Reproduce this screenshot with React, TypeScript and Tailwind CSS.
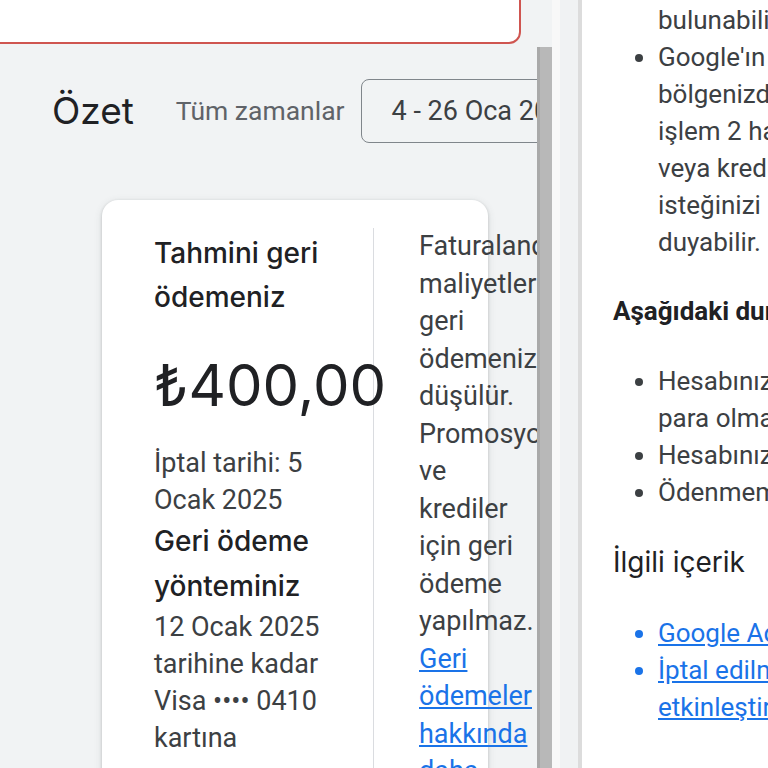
import * as React from "react";

const sans = "font-['Inter','Noto_Sans',sans-serif]";
const body = "font-['Roboto','Liberation_Sans',sans-serif]";

function Scrollbar() {
  return (
    <div className="flex w-[15px] shrink-0 flex-col bg-[#f1f3f4]">
      <div className="h-[47px] shrink-0" />
      <div className="flex-1 border-l-[3px] border-[#a9a9a9] bg-[#b8b8b8]" />
    </div>
  );
}

function SummaryCard() {
  return (
    <div className="ml-[102px] mt-[57px] flex w-[386px] shrink-0 rounded-2xl bg-white pt-[28px] shadow-[0_1px_3px_rgba(60,64,67,0.25),0_2px_8px_rgba(60,64,67,0.12)]">
      <div className="w-[271px] shrink-0 pl-[52px] pr-[24px] pt-[3px]">
        <h3 className={`${sans} text-[28px] font-medium leading-[44px] text-[#202124]`}>
          Tahmini geri ödemeniz
        </h3>
        <div className={`${sans} relative z-10 mt-[31px] whitespace-nowrap text-[58px] leading-[70px] text-[#202124]`}>
          ₺400,00
        </div>
        <p className={`${body} mt-[25px] text-[27px] leading-[37px] text-[#3c4043]`}>
          İptal tarihi: 5 Ocak 2025
        </p>
        <h3 className={`${sans} text-[28px] font-medium leading-[45px] text-[#202124]`}>
          Geri ödeme yönteminiz
        </h3>
        <p className={`${body} text-[27px] leading-[37px] text-[#3c4043]`}>
          12 Ocak 2025 tarihine kadar Visa •••• 0410 kartına
        </p>
      </div>
      <div className="w-px shrink-0 bg-[#dadce0]" />
      <div className="shrink-0 pl-[45px]">
        <p className={`${body} w-[120px] text-[27px] leading-[37.5px] text-[#3c4043]`}>
          Faturalandırılan maliyetler geri ödemenizden düşülür. Promosyonlar ve
          krediler için geri ödeme yapılmaz.{" "}
          <a href="#" className="text-[#1a73e8] underline underline-offset-2">
            Geri ödemeler hakkında daha fazla bilgi
          </a>
        </p>
      </div>
    </div>
  );
}

function LeftPane() {
  return (
    <div className="flex h-full w-[552px] shrink-0">
      <div className="flex h-full w-[537px] shrink-0 flex-col overflow-hidden bg-[#f1f3f4]">
        <div className="-ml-[20px] -mt-[20px] h-[64px] w-[541px] shrink-0 rounded-xl border-2 border-[#cf5550] bg-white" />
        <div className="mt-[35px] flex shrink-0 items-center pl-[52px]">
          <h2 className={`${sans} shrink-0 text-[37px] leading-[44px] text-[#202124]`}>Özet</h2>
          <span className={`${body} ml-[42px] shrink-0 whitespace-nowrap text-[26.5px] text-[#5f6368]`}>
            Tüm zamanlar
          </span>
          <div
            className={`${body} ml-[16px] flex h-[64px] shrink-0 items-center whitespace-nowrap rounded-lg border border-[#80868b] pl-[30px] pr-6 text-[27px] text-[#3c4043]`}
          >
            4 - 26 Oca 2025
          </div>
        </div>
        <SummaryCard />
      </div>
      <Scrollbar />
    </div>
  );
}

function RightPane() {
  return (
    <div className={`${body} h-full flex-1 overflow-hidden bg-white pl-[31px] text-[26px] text-[#3c4043]`}>
      <div className="mt-[2px] whitespace-nowrap pl-[45px] leading-[37px]">
        bulunabilirsiniz.
      </div>
      <ul className="list-disc whitespace-nowrap pl-[45px] leading-[37px]">
        <li>
          Google'ın ödeme ortağına bağlı olarak
          <br />
          bölgenizde geri ödeme alabilmeniz için
          <br />
          işlem 2 hafta sürebilir. Bankanız
          <br />
          veya kredi kartı şirketiniz geri ödeme
          <br />
          isteğinizi işleme koyarken ek süreye
          <br />
          duyabilir.
        </li>
      </ul>
      <p className="mt-[32px] whitespace-nowrap font-bold leading-[37px] text-[#202124]">
        Aşağıdaki durumlarda geri ödeme alamazsınız:
      </p>
      <ul className="mt-[33px] list-disc whitespace-nowrap pl-[45px] leading-[37px]">
        <li>
          Hesabınızda geri ödenecek
          <br />
          para olmadığında
        </li>
        <li>Hesabınız askıya alındığında</li>
        <li>Ödenmemiş bakiyeniz olduğunda</li>
      </ul>
      <h2 className={`${sans} mt-[31px] whitespace-nowrap text-[28px] leading-[40px] text-[#202124]`}>
        İlgili içerik
      </h2>
      <ul className="mt-[33px] list-disc whitespace-nowrap pl-[45px] leading-[37px] text-[#1a73e8]">
        <li>
          <a href="#" className="underline underline-offset-2">
            Google Ads hesabınızı iptal etme
          </a>
        </li>
        <li>
          <a href="#" className="underline underline-offset-2">
            İptal edilmiş bir hesabı yeniden
            <br />
            etkinleştirme
          </a>
        </li>
      </ul>
    </div>
  );
}

export default function App() {
  return (
    <div className="flex h-[768px] w-[768px] overflow-hidden bg-white">
      <LeftPane />
      <div className="w-[8px] shrink-0 bg-[#f8f8f8]" />
      <div className="w-[18px] shrink-0 bg-[#f0f2f3]" />
      <div className="w-[4px] shrink-0 bg-[#dcdcdc]" />
      <RightPane />
    </div>
  );
}
